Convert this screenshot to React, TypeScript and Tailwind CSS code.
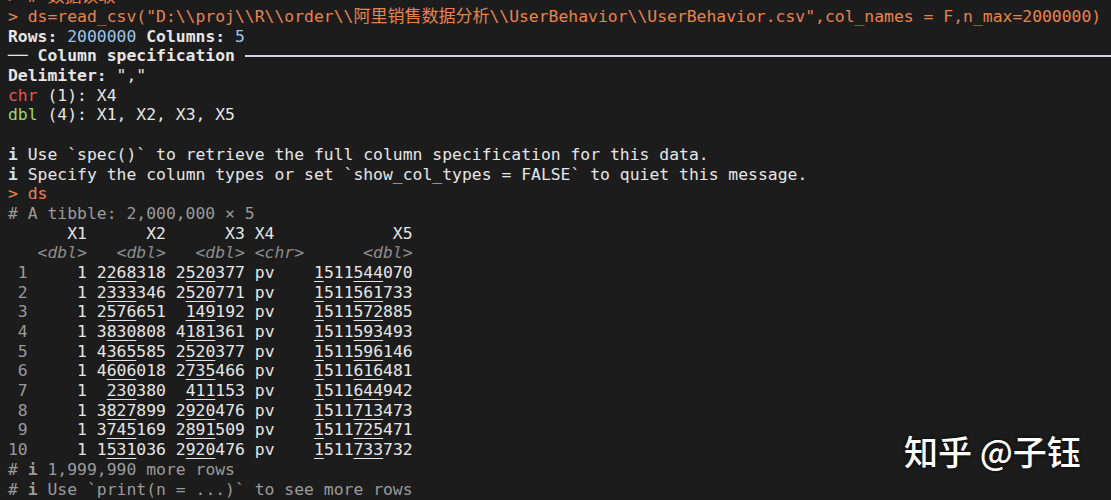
import React from "react";

const rows: [string, string, string, string, string][] = [
  ["1", "2268318", "2520377", "pv", "1511544070"],
  ["1", "2333346", "2520771", "pv", "1511561733"],
  ["1", "2576651", "149192", "pv", "1511572885"],
  ["1", "3830808", "4181361", "pv", "1511593493"],
  ["1", "4365585", "2520377", "pv", "1511596146"],
  ["1", "4606018", "2735466", "pv", "1511616481"],
  ["1", "230380", "411153", "pv", "1511644942"],
  ["1", "3827899", "2920476", "pv", "1511713473"],
  ["1", "3745169", "2891509", "pv", "1511725471"],
  ["1", "1531036", "2920476", "pv", "1511733732"],
];

// pillar style: every other group of three digits (from the right) is underlined
function Num({ v, w }: { v: string; w: number }) {
  const groups: string[] = [];
  for (let end = v.length; end > 0; end -= 3) groups.unshift(v.slice(Math.max(0, end - 3), end));
  const n = groups.length;
  return (
    <span>
      {" ".repeat(Math.max(0, w - v.length))}
      {groups.map((g, i) =>
        (n - 1 - i) % 2 === 1 ? (
          <span key={i} className="underline decoration-1 underline-offset-[3px]">
            {g}
          </span>
        ) : (
          <span key={i}>{g}</span>
        )
      )}
    </span>
  );
}

function Line({ children, className = "" }: { children?: React.ReactNode; className?: string }) {
  return <div className={"h-[19.7px] whitespace-pre " + className}>{children}</div>;
}

const Info = () => <span className="font-bold text-[#d6e2f3]">i</span>;

export default function App() {
  return (
    <div className="relative h-[500px] w-[1111px] overflow-hidden bg-[#1c1c1c] font-['DejaVu_Sans_Mono','Noto_Sans_CJK_SC',monospace] text-[16.4px] leading-[19.7px] text-[#e6e6e6]">
      <div className="-mt-[12.7px] pl-[8px]">
        <Line className="text-[#e8834d]">
          {"> # "}
          <span className="text-[17px]">数据读取</span>
        </Line>
        <Line className="text-[#e8834d]">
          {'> ds=read_csv("D:\\\\proj\\\\R\\\\order\\\\'}
          <span className="text-[17px]">阿里销售数据分析</span>
          {'\\\\UserBehavior\\\\UserBehavior.csv",col_names = F,n_max=2000000)'}
        </Line>
        <Line>
          <span className="font-bold">Rows:</span> <span className="text-[#9fc6ea]">2000000</span>{" "}
          <span className="font-bold">Columns:</span> <span className="text-[#9fc6ea]">5</span>
        </Line>
        <Line className="flex items-center">
          <span className="font-bold">{"── Column specification "}</span>
          <div className="h-[2px] flex-1 bg-[#d2d3e2]" />
        </Line>
        <Line>
          <span className="font-bold">Delimiter:</span> ","
        </Line>
        <Line>
          <span className="text-[#e05a5a]">chr</span> (1): X4
        </Line>
        <Line>
          <span className="text-[#9ed86a]">dbl</span> (4): X1, X2, X3, X5
        </Line>
        <Line />
        <Line>
          <Info /> Use `spec()` to retrieve the full column specification for this data.
        </Line>
        <Line>
          <Info /> Specify the column types or set `show_col_types = FALSE` to quiet this message.
        </Line>
        <Line className="text-[#e8834d]">{"> ds"}</Line>
        <Line className="text-[#9a9a9a]"># A tibble: 2,000,000 × 5</Line>
        <Line>{"      X1      X2      X3 X4            X5"}</Line>
        <Line className="italic text-[#8c8c8c]">{"   <dbl>   <dbl>   <dbl> <chr>      <dbl>"}</Line>
        {rows.map((r, i) => (
          <Line key={i}>
            <span className="text-[#9a9a9a]">{String(i + 1).padStart(2, " ")}</span>
            {" "}
            <Num v={r[0]} w={5} />
            {" "}
            <Num v={r[1]} w={7} />
            {" "}
            <Num v={r[2]} w={7} />
            {" "}
            {r[3].padEnd(5, " ")}
            {" "}
            <Num v={r[4]} w={10} />
          </Line>
        ))}
        <Line className="text-[#9a9a9a]">
          # <span className="font-bold">i</span> 1,999,990 more rows
        </Line>
        <Line className="text-[#9a9a9a]">
          # <span className="font-bold">i</span> Use `print(n = ...)` to see more rows
        </Line>
      </div>
      <div className="absolute left-[904px] top-[431px] font-['Noto_Sans_CJK_SC',sans-serif] text-[34px] leading-[40px] font-medium text-white [text-shadow:0_0_4px_rgba(0,0,0,0.9)]">
        知乎 @子钰
      </div>
    </div>
  );
}
